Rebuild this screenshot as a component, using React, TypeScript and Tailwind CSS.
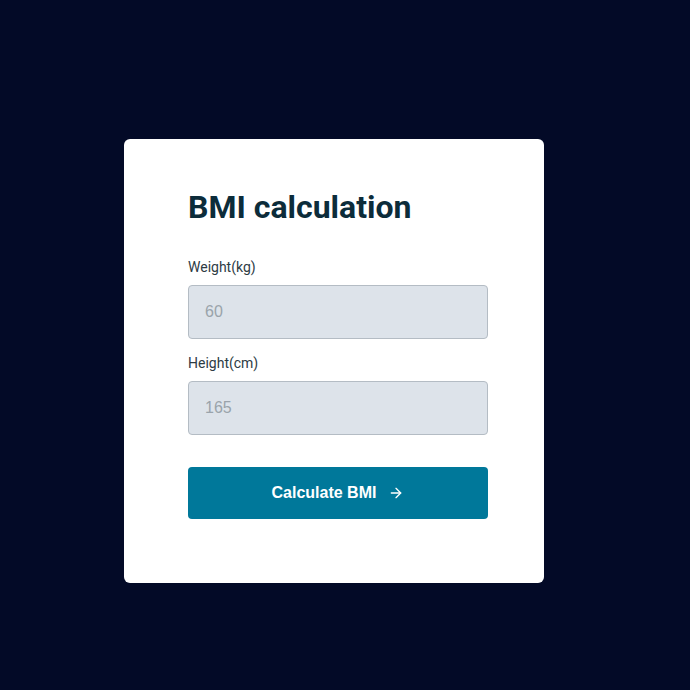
import React from 'react';

const App = () => {
  return (
    <div className="min-h-screen w-full bg-[#030a27] pt-[139px] pl-[124px]" style={{ minHeight: 690 }}>
      <div className="w-[420px] rounded-md bg-white pl-16 pr-14 pt-[48px] pb-[64px] font-['Roboto',sans-serif]">
        <h1 className="text-[32px] font-bold leading-[40px] text-[#0c2c3a]">BMI calculation</h1>

        <form className="mt-[30px] flex flex-col" onSubmit={(e) => e.preventDefault()}>
          <label className="text-sm leading-5 text-[#2d3b44]">Weight(kg)</label>
          <input
            type="number"
            placeholder="60"
            className="mt-2 h-[54px] w-full rounded border border-[#b4bcc4] bg-[#dde3ea] px-4 font-['Liberation_Sans',Arial,sans-serif] text-base placeholder:text-[#9aa3ab] outline-none"
          />

          <label className="mt-[14px] text-sm leading-5 text-[#2d3b44]">Height(cm)</label>
          <input
            type="number"
            placeholder="165"
            className="mt-2 h-[54px] w-full rounded border border-[#b4bcc4] bg-[#dde3ea] px-4 font-['Liberation_Sans',Arial,sans-serif] text-base placeholder:text-[#9aa3ab] outline-none"
          />

          <button
            type="submit"
            className="mt-8 flex h-[52px] w-full items-center justify-center gap-3 rounded bg-[#00789a] font-['Liberation_Sans',Arial,sans-serif] text-base font-bold text-white"
          >
            Calculate BMI
            <svg width="16" height="16" viewBox="0 0 24 24" fill="none" stroke="currentColor" strokeWidth="2" strokeLinecap="round" strokeLinejoin="round">
              <path d="M5 12h14" />
              <path d="m12 5 7 7-7 7" />
            </svg>
          </button>
        </form>
      </div>
    </div>
  );
};

export default App;
